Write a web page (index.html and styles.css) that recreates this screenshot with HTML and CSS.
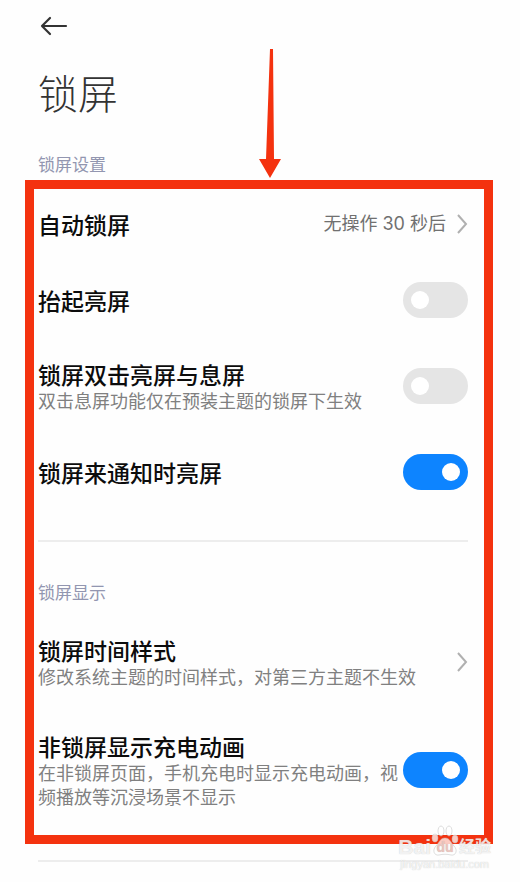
FILE: index.html
```html
<!DOCTYPE html>
<html lang="zh-CN">
<head>
<meta charset="utf-8">
<meta name="viewport" content="width=device-width, initial-scale=1">
<title>锁屏</title>
<link rel="stylesheet" href="styles.css">
</head>
<body>
<main class="page">
  <header class="header">
    <button class="back" type="button" aria-label="返回">
      <svg width="28" height="20" viewBox="0 0 28 20" fill="none" stroke="#333" stroke-width="2.2" stroke-linecap="round" stroke-linejoin="round"><path d="M26 10H2M10 2L2 10L10 18"/></svg>
    </button>
    <h1 class="heading">锁屏</h1>
  </header>

  <h2 class="label">锁屏设置</h2>
  <div class="settings">
    <section class="group">
      <a class="row" href="#auto-lock">
        <span class="title">自动锁屏</span>
        <span class="value">无操作 30 秒后</span>
        <svg class="chevron" width="12" height="20" viewBox="0 0 12 20"><path d="M2 1L10 10L2 19"/></svg>
      </a>
      <div class="row">
        <label class="text" for="raise"><span class="title">抬起亮屏</span></label>
        <input class="switch" id="raise" type="checkbox" role="switch">
      </div>
      <div class="row">
        <label class="text" for="double-tap"><span class="title">锁屏双击亮屏与息屏</span><span class="desc">双击息屏功能仅在预装主题的锁屏下生效</span></label>
        <input class="switch" id="double-tap" type="checkbox" role="switch">
      </div>
      <div class="row">
        <label class="text" for="notify"><span class="title">锁屏来通知时亮屏</span></label>
        <input class="switch" id="notify" type="checkbox" role="switch" checked>
      </div>
    </section>

    <section class="group">
      <h2 class="label">锁屏显示</h2>
      <a class="row" href="#clock-style">
        <span class="text"><span class="title">锁屏时间样式</span><span class="desc">修改系统主题的时间样式，对第三方主题不生效</span></span>
        <svg class="chevron" width="12" height="20" viewBox="0 0 12 20"><path d="M2 1L10 10L2 19"/></svg>
      </a>
      <div class="row">
        <label class="text" for="charging"><span class="title">非锁屏显示充电动画</span><span class="desc">在非锁屏页面，手机充电时显示充电动画，视频播放等沉浸场景不显示</span></label>
        <input class="switch" id="charging" type="checkbox" role="switch" checked>
      </div>
    </section>

    <div class="frame"></div>
    <svg class="pointer" width="24" height="130" viewBox="0 0 24 130"><path fill="#f4320f" d="M11 0H14L15 110H22L11 129L0 110H7Z"/></svg>
    <div class="watermark">
      <div class="brand">
        <span>Bai</span>
        <span class="paw"><svg width="28" height="32" viewBox="0 0 28 32"><ellipse cx="4" cy="13" rx="3" ry="4"/><ellipse cx="10" cy="6" rx="3" ry="5"/><ellipse cx="18" cy="6" rx="3" ry="5"/><ellipse cx="24" cy="14" rx="3" ry="4"/><path d="M14 13C9 13 8 18 5 21C1 25 3 31 8 30C12 29 16 29 20 30C25 31 27 25 23 21C20 18 19 13 14 13Z"/></svg><span class="du">du</span></span>
        <span class="cn">经验</span>
      </div>
      <div class="site">jingyan.baidu.com</div>
    </div>
  </div>
</main>
</body>
</html>
```
FILE: styles.css
```css
* {
  box-sizing: border-box;
}

body {
  margin: 0;
  background: #fefefe;
  color: #0c0c0c;
  font-family: "Noto Sans CJK SC", sans-serif;
}

.page {
  padding: 0 52px 20px 38px;
}

.back {
  display: flex;
  align-items: center;
  height: 52px;
  padding: 0 2px;
  border: 0;
  background: none;
}

.heading {
  margin: 12px 0 32px;
  color: #333;
  font-size: 40px;
  font-weight: 300;
  line-height: 56px;
}

.label {
  margin: 0 0 10px;
  color: #9296b0;
  font-size: 17px;
  font-weight: 400;
  line-height: 24px;
}

.settings {
  position: relative;
}

.group {
  padding-bottom: 30px;
  border-bottom: 2px solid #ededed;
}

.group + .group {
  padding-top: 38px;
}

.row {
  display: flex;
  align-items: center;
  min-height: 76px;
  padding: 20px 0;
  color: inherit;
  text-decoration: none;
}

.text {
  flex: 1;
  min-width: 0;
  padding: 2px 0;
}

.title,
.desc {
  display: block;
}

.title {
  font-size: 23px;
  font-weight: 500;
  line-height: 28px;
}

.desc {
  color: #808080;
  font-size: 18px;
  font-weight: 400;
  line-height: 24px;
}

.value {
  margin-left: auto;
  padding-right: 10px;
  color: #707070;
  font-family: Inter, "Noto Sans CJK SC", sans-serif;
  font-size: 18px;
  line-height: 24px;
}

.chevron {
  flex: none;
  fill: none;
  stroke: #b0b0b0;
  stroke-width: 2;
}

.switch {
  flex: none;
  appearance: none;
  display: flex;
  align-items: center;
  width: 65px;
  height: 36px;
  margin: 0;
  padding: 0 8px;
  border-radius: 18px;
  background: #e5e5e5;
}

.switch::before {
  content: "";
  width: 18px;
  height: 18px;
  border-radius: 50%;
  background: #fff;
}

.switch:checked {
  justify-content: flex-end;
  background: #0d84ff;
}

/* Annotations drawn over the list */
.frame {
  position: absolute;
  inset: -6px -25px 18px -13px;
  border: 9px solid #f4320f;
  pointer-events: none;
}

.pointer {
  position: absolute;
  top: -137px;
  left: 221px;
}

.watermark {
  position: absolute;
  right: -23px;
  bottom: -9px;
  color: rgba(255, 255, 255, 0.8);
  font-family: "Liberation Sans", "Noto Sans CJK SC", sans-serif;
  text-shadow: 0 0 1px rgba(150, 150, 150, 0.6);
  pointer-events: none;
}

.brand {
  display: flex;
  align-items: flex-end;
  font-size: 21px;
  font-weight: 700;
  line-height: 20px;
}

.paw {
  position: relative;
  height: 32px;
}

.paw svg {
  display: block;
  fill: rgba(255, 255, 255, 0.75);
  stroke: rgba(190, 190, 190, 0.5);
}

.du {
  position: absolute;
  right: 0;
  bottom: 2px;
  left: 0;
  color: #ecc4bd;
  font-size: 14px;
  line-height: 16px;
  text-align: center;
}

.cn {
  font-size: 16px;
}

.site {
  font-size: 11px;
  line-height: 14px;
  text-align: center;
}
```
